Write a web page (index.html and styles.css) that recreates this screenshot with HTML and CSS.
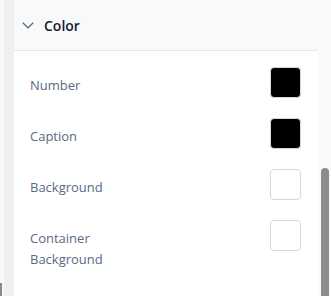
FILE: index.html
```html
<!DOCTYPE html>
<html lang="en">

<head>
    <meta charset="UTF-8">
    <meta name="viewport" content="width=device-width, initial-scale=1.0">
    <title>Color</title>
    <link rel="stylesheet" href="styles.css">
</head>

<body>
    <div class="page">
        <div class="edge">
            <span class="edge-mark"></span>
        </div>
        <div class="gutter"></div>
        <div class="panel">
            <!-- 分组标题 -->
            <div class="panel-head">
                <svg class="chevron" width="12" height="7" viewBox="0 0 12 7">
                    <path d="M0.8 0.8 L6 5.8 L11.2 0.8" fill="none" stroke="#5f6878" stroke-width="1.2" />
                </svg>
                <span class="panel-title">Color</span>
            </div>
            <!-- 颜色选项 -->
            <div class="panel-body">
                <div class="row">
                    <span class="label">Number</span>
                    <span class="swatch dark"></span>
                </div>
                <div class="row">
                    <span class="label">Caption</span>
                    <span class="swatch dark"></span>
                </div>
                <div class="row">
                    <span class="label">Background</span>
                    <span class="swatch"></span>
                </div>
                <div class="row">
                    <span class="label">Container<br>Background</span>
                    <span class="swatch"></span>
                </div>
            </div>
        </div>
        <div class="rail">
            <div class="thumb"></div>
        </div>
    </div>
</body>

</html>
```

FILE: styles.css
```css
* {
    margin: 0;
    padding: 0;
    box-sizing: border-box;
}

body {
    font-family: "Open Sans", "Noto Sans", sans-serif;
    background-color: #fff;
}

.page {
    display: flex;
    width: 331px;
    height: 296px;
    overflow: hidden;
}

.edge {
    display: flex;
    flex-direction: column;
    justify-content: flex-end;
    width: 4px;
    background-color: #f7f7f8;
}

.edge-mark {
    width: 2px;
    height: 13px;
    background-color: #8a8a8a;
}

.gutter {
    width: 10px;
    background-color: #eeeff1;
}

.panel {
    width: 304px;
    background-color: #fff;
}

.panel-head {
    display: flex;
    align-items: center;
    height: 51px;
    padding-left: 8px;
    background-color: #f8f9fb;
    border-bottom: 1px solid #e6e8ec;
}

.chevron {
    margin-right: 10px;
    margin-top: 1px;
}

.panel-title {
    margin-top: 1px;
    font-size: 14px;
    font-weight: 600;
    color: #151a2d;
}

.panel-body {
    padding: 6px 16px 0 16px;
}

.row {
    display: flex;
    justify-content: space-between;
    align-items: flex-start;
    padding: 10px 1px 10px 0;
}

.label {
    margin-top: 8px;
    font-size: 13px;
    line-height: 21px;
    color: #5b6a80;
}

.swatch {
    width: 31px;
    height: 31px;
    border: 1px solid #d3d8e0;
    border-radius: 4px;
    background-color: #fff;
}

.swatch.dark {
    background-color: #000;
}

.rail {
    display: flex;
    flex-direction: column;
    justify-content: flex-end;
    width: 13px;
    padding-left: 3px;
    background-color: #f9f9f9;
}

.thumb {
    width: 8px;
    height: 128px;
    border-radius: 4px 4px 0 0;
    background-color: #8c8c8c;
}
```
